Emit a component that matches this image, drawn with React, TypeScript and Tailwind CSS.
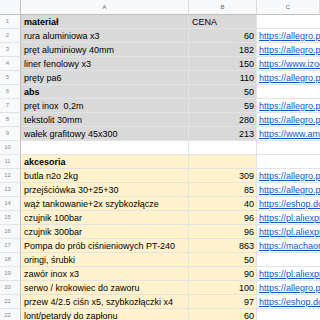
import React from "react";

type Fill = "g" | "y" | "w";
type Row = { a: string; b: string; c: string; fill: Fill; bold?: boolean };

const rows: Row[] = [
  { a: "materiał", b: "CENA", c: "", fill: "g", bold: true },
  { a: "rura aluminiowa x3", b: "60", c: "https://allegro.pl/oferta/rura", fill: "g" },
  { a: "pręt aluminiowy 40mm", b: "182", c: "https://allegro.pl/oferta/pret", fill: "g" },
  { a: "liner fenolowy x3", b: "150", c: "https://www.izoerg.pl/liner", fill: "g" },
  { a: "pręty pa6", b: "110", c: "https://allegro.pl/oferta/prety", fill: "g" },
  { a: "abs", b: "50", c: "", fill: "g", bold: true },
  { a: "pręt inox  0,2m", b: "59", c: "https://allegro.pl/oferta/inox", fill: "g" },
  { a: "tekstolit 30mm", b: "280", c: "https://allegro.pl/oferta/tekstolit", fill: "g" },
  { a: "wałek grafitowy 45x300", b: "213", c: "https://www.amazon.de/walek", fill: "g" },
  { a: "", b: "", c: "", fill: "w" },
  { a: "akcesoria", b: "", c: "", fill: "y", bold: true },
  { a: "butla n2o 2kg", b: "309", c: "https://allegro.pl/oferta/butla", fill: "y" },
  { a: "przejściówka 30+25+30", b: "85", c: "https://allegro.pl/oferta/przejsciowka", fill: "y" },
  { a: "wąż tankowanie+2x szybkozłącze", b: "40", c: "https://eshop.dominik.pl", fill: "y" },
  { a: "czujnik 100bar", b: "96", c: "https://pl.aliexpress.com/item", fill: "y" },
  { a: "czujnik 300bar", b: "96", c: "https://pl.aliexpress.com/item", fill: "y" },
  { a: "Pompa do prób ciśnieniowych PT-240", b: "863", c: "https://machaon.pl/pompa", fill: "y" },
  { a: "oringi, śrubki", b: "50", c: "", fill: "y" },
  { a: "zawór inox x3", b: "90", c: "https://pl.aliexpress.com/item", fill: "y" },
  { a: "serwo / krokowiec do zaworu", b: "100", c: "https://allegro.pl/oferta/serwo", fill: "y" },
  { a: "przew 4/2.5 ciśn x5, szybkozłączki x4", b: "97", c: "https://eshop.dominik.pl", fill: "y" },
  { a: "lont/petardy do zapłonu", b: "60", c: "", fill: "y" },
];

const fillClass: Record<Fill, string> = {
  g: "bg-[#d9d9d9]",
  y: "bg-[#fff2cc]",
  w: "bg-white",
};

export default function App() {
  return (
    <div className="w-[320px] h-[320px] overflow-hidden bg-white font-['Liberation_Sans',Arial,sans-serif] text-black">
      <div className="grid grid-cols-[21px_168px_68px_1fr] auto-rows-[14px] [grid-template-rows:15px]">
        {/* header row */}
        <div className="h-[15px] bg-[#f8f9fa] border-r border-b border-[#c0c0c0]" />
        <div className="h-[15px] bg-[#f8f9fa] border-r border-r-[#dadce0] border-b border-b-[#c0c0c0] flex items-center justify-center text-[6px] text-[#666]">
          A
        </div>
        <div className="h-[15px] bg-[#f8f9fa] border-r border-r-[#dadce0] border-b border-b-[#c0c0c0] flex items-center justify-center text-[6px] text-[#666]">
          B
        </div>
        <div className="h-[15px] bg-[#f8f9fa] border-r border-r-[#dadce0] border-b border-b-[#c0c0c0] flex items-center justify-center text-[6px] text-[#666]">
          C
        </div>

        {rows.map((r, i) => (
          <React.Fragment key={i}>
            <div className="h-[14px] bg-[#f8f9fa] border-r border-r-[#c0c0c0] border-b border-b-[#e2e3e3] flex items-center justify-center pr-[5px] text-[6px] text-[#8a8a8a]">
              {i + 1}
            </div>
            <div
              className={`h-[14px] ${fillClass[r.fill]} border-r border-b border-[#e2e3e3] flex items-end pl-[3px] overflow-hidden whitespace-pre text-[9px] leading-[11px] ${r.bold ? "font-bold" : ""}`}
            >
              {r.a}
            </div>
            <div
              className={`h-[14px] ${fillClass[r.fill]} border-r border-b border-[#e2e3e3] flex items-end overflow-hidden whitespace-nowrap text-[9px] leading-[11px] ${i === 0 ? "justify-start pl-[3px]" : "justify-end pr-[2px]"}`}
            >
              {r.b}
            </div>
            <div className="h-[14px] bg-white border-b border-[#e2e3e3] flex items-end pl-[2px] overflow-hidden whitespace-nowrap text-[9px] leading-[11px]">
              {r.c && <span className="text-[#1155cc] underline">{r.c}</span>}
            </div>
          </React.Fragment>
        ))}
      </div>
    </div>
  );
}
